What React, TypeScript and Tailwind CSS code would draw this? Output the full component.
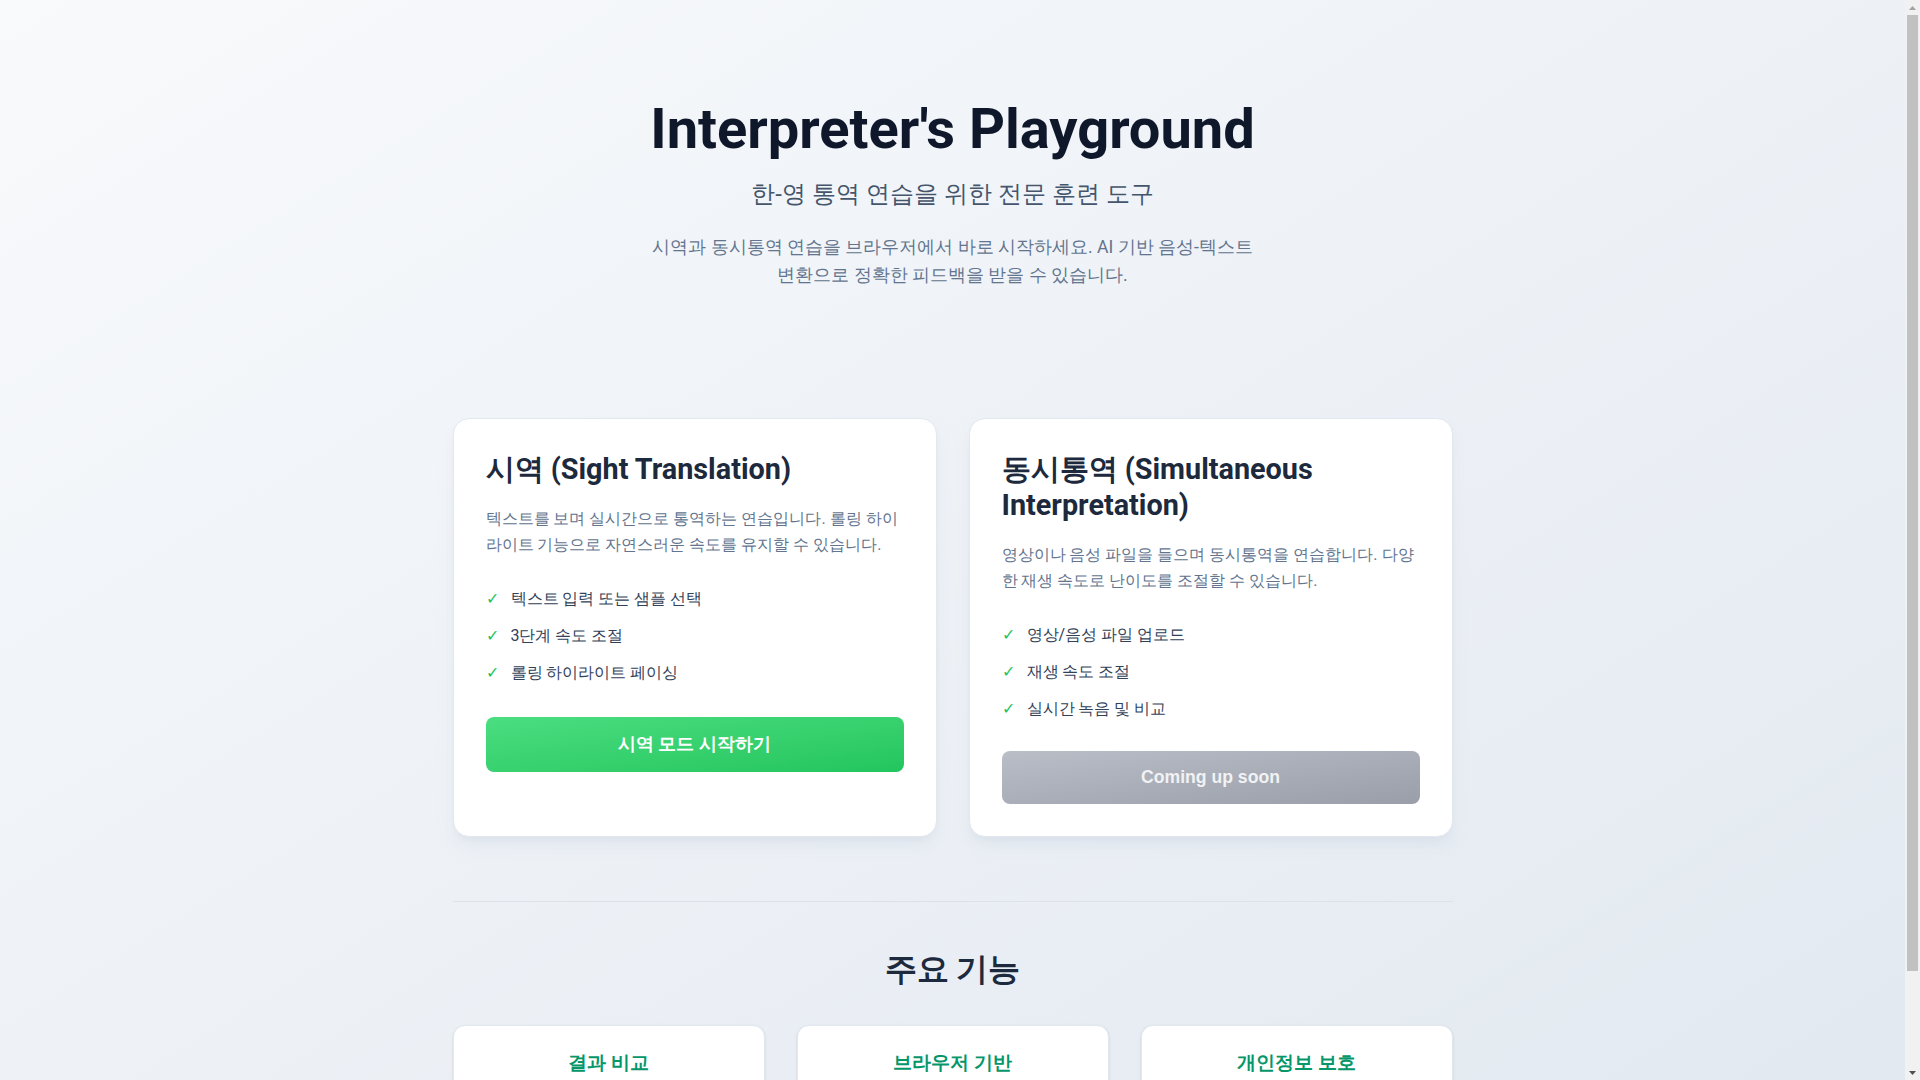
const modes = [
  {
    title: "시역 (Sight Translation)",
    desc: "텍스트를 보며 실시간으로 통역하는 연습입니다. 롤링 하이라이트 기능으로 자연스러운 속도를 유지할 수 있습니다.",
    items: ["텍스트 입력 또는 샘플 선택", "3단계 속도 조절", "롤링 하이라이트 페이싱"],
    action: "시역 모드 시작하기",
    enabled: true,
  },
  {
    title: "동시통역 (Simultaneous Interpretation)",
    desc: "영상이나 음성 파일을 들으며 동시통역을 연습합니다. 다양한 재생 속도로 난이도를 조절할 수 있습니다.",
    items: ["영상/음성 파일 업로드", "재생 속도 조절", "실시간 녹음 및 비교"],
    action: "Coming up soon",
    enabled: false,
  },
];

const features = [
  { title: "결과 비교", desc: "원문과 통역 결과를 나란히 비교합니다" },
  { title: "브라우저 기반", desc: "설치 없이 브라우저에서 바로 사용합니다" },
  { title: "개인정보 보호", desc: "음성 데이터는 서버에 저장되지 않습니다" },
];

const ModeCard = ({ mode }: { mode: (typeof modes)[number] }) => {
  return (
    <div className="flex flex-col rounded-2xl border border-slate-200 bg-white p-8 shadow-lg shadow-slate-300/40">
      <h2 className="text-[28.8px] leading-9 font-bold text-slate-800">{mode.title}</h2>
      <p className="mt-[19px] text-base leading-[26px] text-slate-500">{mode.desc}</p>

      <ul className="mt-[28px] flex flex-col gap-3">
        {mode.items.map((item) => (
          <li key={item} className="flex items-center text-base leading-[25px] text-slate-700">
            <span className="mr-3 text-[#22c55e]">✓</span>
            {item}
          </li>
        ))}
      </ul>

      {mode.enabled ? (
        <button className="mt-8 h-[55px] w-full rounded-lg bg-linear-to-br from-[#4ade80] to-[#22c55e] font-['Liberation_Sans',sans-serif] text-[17.6px] font-bold text-white">
          {mode.action}
        </button>
      ) : (
        <button
          disabled
          className="mt-[30px] h-[53px] w-full rounded-lg bg-linear-to-br from-[#babec7] to-[#9a9ea9] font-['Liberation_Sans',sans-serif] text-[17.6px] font-bold text-[#f1f2f4]"
        >
          {mode.action}
        </button>
      )}
    </div>
  );
};

// 브라우저 스크롤바 모양
const ScrollBar = () => {
  return (
    <div className="flex h-full w-[15px] shrink-0 flex-col bg-[#f1f1f1]">
      <div className="flex h-[15px] items-center justify-center">
        <svg width="7" height="4" viewBox="0 0 7 4">
          <path d="M3.5 0L7 4H0z" fill="#a3a3a3" />
        </svg>
      </div>
      <div className="mx-[2px] h-[956px] bg-[#c1c1c1]" />
      <div className="flex-1" />
      <div className="flex h-[15px] items-center justify-center">
        <svg width="7" height="4" viewBox="0 0 7 4">
          <path d="M0 0H7L3.5 4z" fill="#505050" />
        </svg>
      </div>
    </div>
  );
};

export default function App() {
  return (
    <div className="flex h-screen overflow-hidden font-['Roboto',sans-serif]">
      <div className="flex-1 overflow-hidden">
        <div className="bg-linear-to-br from-slate-50 to-slate-200">
          <div className="mx-auto w-[1000px] pt-[97px] pb-14">
            {/* 헤더 */}
            <header className="text-center">
              <h1 className="text-[56px] leading-[64px] font-bold text-slate-900">Interpreter's Playground</h1>
              <p className="mt-[17px] text-2xl leading-8 text-slate-600">한-영 통역 연습을 위한 전문 훈련 도구</p>
              <p className="mx-auto mt-[23px] max-w-[620px] text-[17.6px] leading-[28px] text-slate-500">
                시역과 동시통역 연습을 브라우저에서 바로 시작하세요. AI 기반 음성-텍스트 변환으로 정확한 피드백을 받을
                수 있습니다.
              </p>
            </header>

            {/* 모드 카드 */}
            <div className="mt-[129px] grid grid-cols-2 gap-8">
              {modes.map((mode) => (
                <ModeCard key={mode.title} mode={mode} />
              ))}
            </div>

            <div className="mt-16 h-px bg-[#dde2ea]" />

            {/* 주요 기능 */}
            <h2 className="mt-[47px] text-center text-[32px] leading-10 font-bold text-slate-800">주요 기능</h2>
            <div className="mt-9 grid grid-cols-3 gap-8">
              {features.map((f) => (
                <div
                  key={f.title}
                  className="rounded-xl border border-slate-200 bg-white px-6 pt-[23px] pb-6 text-center shadow-sm"
                >
                  <h3 className="text-[19.2px] leading-7 font-bold text-[#059669]">{f.title}</h3>
                  <p className="mt-2 text-sm leading-5 text-slate-500">{f.desc}</p>
                </div>
              ))}
            </div>
          </div>
        </div>
      </div>
      <ScrollBar />
    </div>
  );
}
